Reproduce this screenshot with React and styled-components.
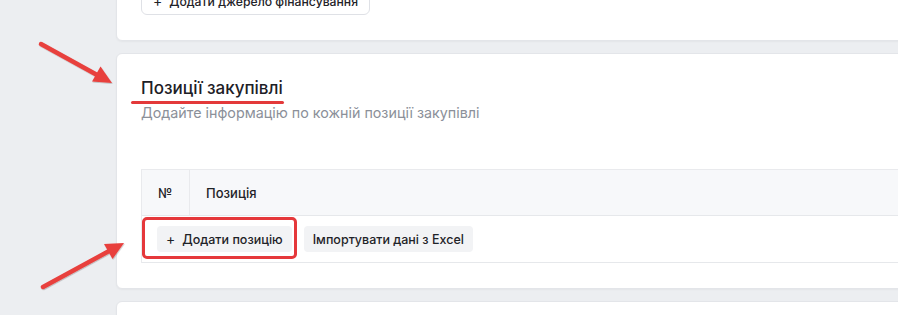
import React from "react";
import styled, { createGlobalStyle } from "styled-components";

const GlobalStyle = createGlobalStyle`
  html, body {
    margin: 0;
    padding: 0;
    background: #eceef1;
  }
  body {
    font-family: Inter, Roboto, "Noto Sans", "Liberation Sans", sans-serif;
    color: #1f2328;
  }
`;

const Page = styled.div`
  position: relative;
  width: 898px;
  height: 315px;
  overflow: hidden;
  background: #eceef1;
`;

const Stack = styled.div`
  display: flex;
  flex-direction: column;
  gap: 12px;
  padding-left: 116px;
  margin-top: -38px;
`;

const Card = styled.section`
  width: 860px;
  background: #fff;
  border: 1px solid #e3e5e9;
  border-radius: 6px;
  box-shadow: 0 1px 2px rgba(20, 24, 32, 0.04);
  padding: ${(p) => p.$top ?? 24}px 24px ${(p) => p.$bottom ?? 24}px;
  box-sizing: border-box;
  min-height: ${(p) => p.$minHeight || 0}px;
`;

const OutlineButton = styled.button`
  display: inline-flex;
  align-items: center;
  gap: 7px;
  height: 28px;
  padding: 0 11px;
  border: 1px solid #dfe1e6;
  border-radius: 6px;
  background: #fff;
  font: 500 12.2px Inter, Roboto, "Liberation Sans", sans-serif;
  color: #1f2328;
`;

const TitleWrap = styled.div`
  position: relative;
  display: inline-block;
`;

const Title = styled.h2`
  margin: 0;
  font-size: 17px;
  font-weight: 500;
  line-height: 22px;
  color: #1d2026;
`;

const Underline = styled.span`
  position: absolute;
  left: -10px;
  right: -1px;
  top: 24px;
  height: 3px;
  border-radius: 2px;
  background: #e3393a;
`;

const Subtitle = styled.p`
  margin: 4px 0 0;
  font-size: 14.3px;
  line-height: 20px;
  color: #8b9099;
`;

const Table = styled.div`
  margin-top: 46px;
  border-top: 1px solid #e9eaed;
  border-left: 1px solid #e9eaed;
`;

const HeadRow = styled.div`
  display: flex;
  height: 45px;
  background: #f7f8fa;
  border-bottom: 1px solid #e6e8eb;
`;

const HeadCell = styled.div`
  display: flex;
  align-items: center;
  padding: 0 16px;
  width: ${(p) => (p.$w ? `${p.$w}px` : "auto")};
  flex: ${(p) => (p.$w ? "none" : 1)};
  box-sizing: border-box;
  border-right: ${(p) => (p.$divider ? "1px solid #e9eaed" : "none")};
  font-size: 13px;
  font-weight: 500;
  color: #1f2328;
`;

const BodyRow = styled.div`
  display: flex;
  align-items: center;
  gap: 12px;
  height: 46px;
  padding: 0 15px;
  border-bottom: 1px solid #e6e8eb;
`;

const Highlight = styled.div`
  position: relative;
  display: flex;
  &::after {
    content: "";
    position: absolute;
    left: -15px;
    right: -5px;
    top: -9px;
    bottom: -7px;
    border: 3px solid #e5383b;
    border-radius: 5px;
    pointer-events: none;
  }
`;

const SoftButton = styled.button`
  display: inline-flex;
  align-items: center;
  gap: 7px;
  height: 26px;
  padding: 0 ${(p) => p.$px || 11}px;
  border: none;
  border-radius: 4px;
  background: #f2f3f5;
  font: 500 12.5px Inter, Roboto, "Liberation Sans", sans-serif;
  color: #1f2328;
`;

const Plus = styled.span`
  font-size: 14px;
  font-weight: 400;
  line-height: 1;
`;

const Arrows = styled.svg`
  position: absolute;
  left: 0;
  top: 0;
  pointer-events: none;
`;

const Arrow = ({ line, head }) => (
  <g filter="url(#sh)">
    <line x1={line[0]} y1={line[1]} x2={line[2]} y2={line[3]} stroke="#e8403e" strokeWidth="4.5" strokeLinecap="round" />
    <polygon points={head} fill="#e8403e" />
  </g>
);

export default function App() {
  return (
    <Page>
      <GlobalStyle />
      <Stack>
        <Card $bottom={25}>
          <OutlineButton>
            <Plus>+</Plus>Додати джерело фінансування
          </OutlineButton>
        </Card>
        <Card $top={23} $bottom={25}>
          <TitleWrap>
            <Title>Позиції закупівлі</Title>
            <Underline />
          </TitleWrap>
          <Subtitle>Додайте інформацію по кожній позиції закупівлі</Subtitle>
          <Table>
            <HeadRow>
              <HeadCell $w={48} $divider>№</HeadCell>
              <HeadCell>Позиція</HeadCell>
            </HeadRow>
            <BodyRow>
              <Highlight>
                <SoftButton $px={9}>
                  <Plus>+</Plus>Додати позицію
                </SoftButton>
              </Highlight>
              <SoftButton $px={9}>Імпортувати дані з Excel</SoftButton>
            </BodyRow>
          </Table>
        </Card>
        <Card $minHeight={60} />
      </Stack>
      <Arrows width="898" height="315">
        <defs>
          <filter id="sh" x="-20%" y="-20%" width="140%" height="140%">
            <feDropShadow dx="0.6" dy="0.8" stdDeviation="0.6" floodColor="#000" floodOpacity="0.25" />
          </filter>
        </defs>
        <Arrow line={[41, 44, 99, 76]} head="112,83 92,81.5 100.5,66.5" />
        <Arrow line={[43, 287, 110, 250.5]} head="124,243 112.5,259 104,244" />
      </Arrows>
    </Page>
  );
}
